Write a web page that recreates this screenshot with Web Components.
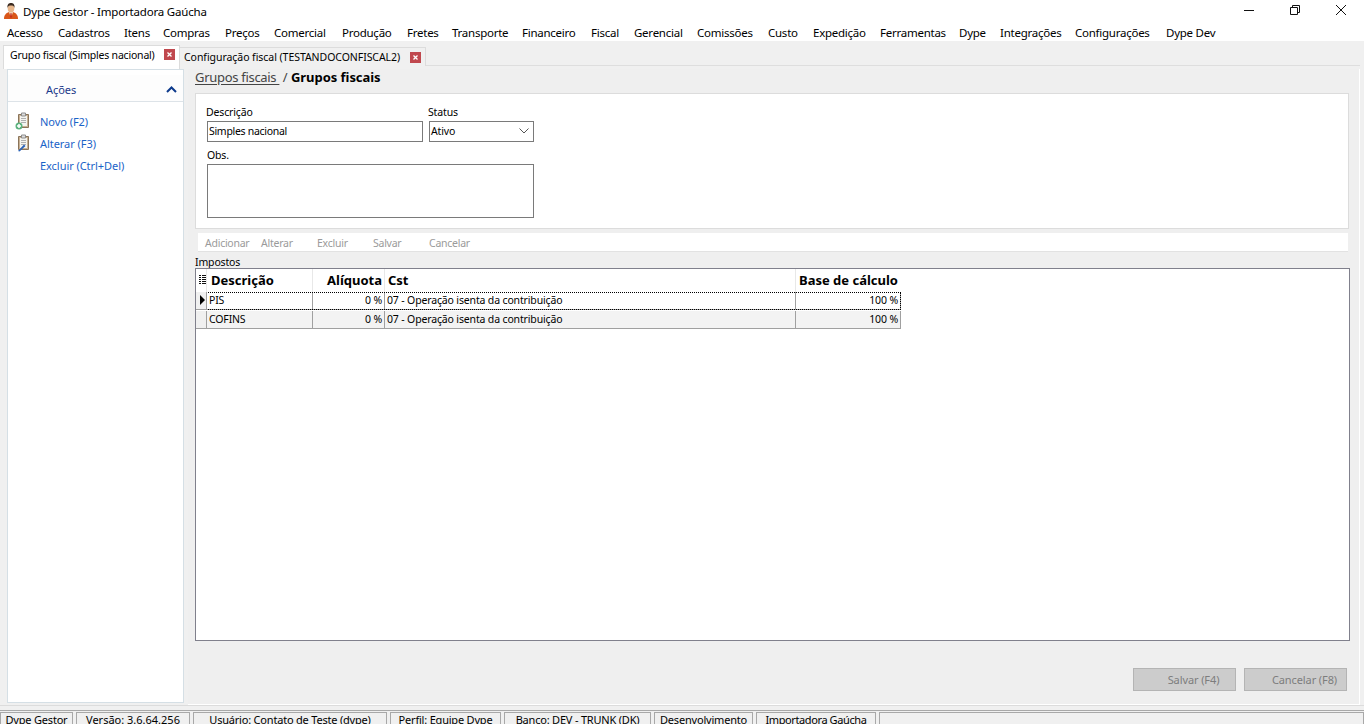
<!DOCTYPE html>
<html lang="pt-BR">
<head>
<meta charset="utf-8">
<title>Dype Gestor</title>
<style>
    html, body { margin: 0; height: 100%; overflow: hidden; }
    body { font: 10.5px "Noto Sans", "Liberation Sans", sans-serif; letter-spacing: -.15px; color: #000; background: #f0f0f0; }
    #app { display: flex; flex-direction: column; width: 1364px; height: 724px; overflow: hidden; }
    #work { display: flex; flex: none; height: 636px; margin-bottom: 4px; border-bottom: 1px solid #dcdcdc; }
</style>
</head>
<body>
<div id="app">
    <app-titlebar>Dype Gestor - Importadora Gaúcha</app-titlebar>
    <app-menubar></app-menubar>
    <app-tabs></app-tabs>
    <div id="work">
        <side-panel></side-panel>
        <fiscal-main></fiscal-main>
    </div>
    <status-bar></status-bar>
</div>

<script>
class AppTitlebar extends HTMLElement {
    constructor() {
        super();
        this.attachShadow({mode: 'open'}).innerHTML = `<style>
            :host { display: flex; align-items: center; height: 22px; background: #fff; font-size: 11.5px; letter-spacing: -.19px; flex: none; }
            .logo { width: 16px; height: 18px; margin: 0 4px 0 3px; }
            .text { flex: 1; padding-top: 1px; }
            .ctl { width: 16px; height: 16px; margin-top: -3px; }
            .ctl + .ctl { margin-left: 30px; }
            .ctls { display: flex; margin-right: 15px; }
        </style>
        <svg class="logo" viewBox="0 0 16 18">
            <path d="M1 17c0-4 2-6 5-7h4c3 1 5 3 5 7z" fill="#d9571a"/>
            <path d="M6 10l2 6 2-6z" fill="#f3e3cf"/>
            <path d="M7.500 11h1l.6 4-1.100 1.500L6.900 15z" fill="#c8301a"/>
            <ellipse cx="8" cy="6.500" rx="3.300" ry="4" fill="#e8b78c"/>
            <path d="M4.500 6C4 2 6 1 8 1s4 1 3.500 5C11 4 10 3.500 8 3.500S5 4 4.500 6z" fill="#3a2a20"/>
        </svg>
        <span class="text"><slot></slot></span>
        <div class="ctls">
            <svg class="ctl" viewBox="0 0 16 16"><path d="M3 8.500h10" stroke="#111" fill="none"/></svg>
            <svg class="ctl" viewBox="0 0 16 16"><path d="M3.500 5.500h7v7h-7zM5.500 5.500v-2h7v7h-2" stroke="#111" fill="none"/></svg>
            <svg class="ctl" viewBox="0 0 16 16"><path d="M3 3l10 10M13 3L3 13" stroke="#111" fill="none"/></svg>
        </div>`;
    }
}

// largura de cada item = distancia ate o proximo item do menu
const MENU_ITEMS = [
    ['Acesso', 51], ['Cadastros', 66], ['Itens', 39], ['Compras', 62], ['Preços', 49],
    ['Comercial', 68], ['Produção', 65], ['Fretes', 45], ['Transporte', 70], ['Financeiro', 69],
    ['Fiscal', 43], ['Gerencial', 63], ['Comissões', 71], ['Custo', 45], ['Expedição', 67],
    ['Ferramentas', 79], ['Dype', 41], ['Integrações', 75], ['Configurações', 91], ['Dype Dev', 60]
];

class AppMenubar extends HTMLElement {
    constructor() {
        super();
        const items = MENU_ITEMS.map(([name, w]) => `<span style="width:${w}px">${name}</span>`).join('');
        this.attachShadow({mode: 'open'}).innerHTML = `<style>
            :host { display: flex; align-items: center; height: 19px; padding: 2px 0 0 7px; box-sizing: border-box; background: #fff; font-size: 11.5px; letter-spacing: -.25px; flex: none; }
            span { flex: none; white-space: nowrap; }
        </style>${items}`;
    }
}

class TabClose extends HTMLElement {
    constructor() {
        super();
        this.attachShadow({mode: 'open'}).innerHTML = `<style>
            :host { display: block; width: 11px; height: 11px; background: #c0484e; flex: none; }
            svg { display: block; }
        </style>
        <svg width="11" height="11" viewBox="0 0 11 11"><path d="M3.500 3.500l4 4M7.500 3.500l-4 4" stroke="#fff" stroke-width="1.300"/></svg>`;
    }
}

class AppTabs extends HTMLElement {
    constructor() {
        super();
        this.attachShadow({mode: 'open'}).innerHTML = `<style>
            :host { display: flex; align-items: flex-start; height: 28px; padding: 4px 4px 0 3px; box-sizing: border-box; background: #f0f0f0; flex: none; }
            .tab { display: flex; align-items: center; box-sizing: border-box; white-space: nowrap; flex: none; }
            .on { width: 177px; height: 24px; padding: 0 4px 6px 6px; justify-content: space-between; background: #fff; border: 1px solid #dcdcdc; border-bottom: 0; letter-spacing: -.2px; }
            .off { width: 246px; height: 19px; margin-top: 2px; padding: 0 4px 0 4px; justify-content: space-between; background: #f0f0f0; border: 1px solid #dcdcdc; border-left: 0; border-bottom: 0; letter-spacing: -.05px; }
            .bar { flex: 1; box-sizing: border-box; height: 19px; margin-top: 2px; border-bottom: 1px solid #dedede; }
        </style>
        <div class="tab on"><span>Grupo fiscal (Simples nacional)</span><tab-close></tab-close></div>
        <div class="tab off"><span>Configuração fiscal (TESTANDOCONFISCAL2)</span><tab-close></tab-close></div>
        <div class="bar"></div>`;
    }
}

class SidePanel extends HTMLElement {
    constructor() {
        super();
        const clip = `<path d="M3.500 2.500h10v13h-10z" fill="#c8b193" stroke="#8a745a"/><path d="M5 4h7v10H5z" fill="#f4f4f0"/><path d="M6.500 1h4v3h-4z" fill="#dcdcdc" stroke="#8c8c8c"/><path d="M6 6.500h5M6 8.500h5M6 10.500h5" stroke="#b0b0b0"/>`;
        this.attachShadow({mode: 'open'}).innerHTML = `<style>
            :host { display: block; width: 177px; margin: 0 0 2px 7px; box-sizing: border-box; background: #fff; border: 1px solid #d5dfe5; flex: none; font-size: 11px; letter-spacing: -.05px; }
            .head { display: flex; align-items: center; justify-content: space-between; height: 27px; margin-top: 5px; padding: 3px 6px 0 38px; box-sizing: border-box; background: #fdfdfd; border-bottom: 1px solid #dde3e8; color: #1c3a8a; }
            .list { display: flex; flex-direction: column; padding-top: 8px; color: #1a63c8; }
            .row { display: flex; align-items: center; height: 22px; }
            .ico { width: 16px; height: 18px; margin: 0 9px 0 7px; flex: none; }
        </style>
        <div class="head"><span>Ações</span>
            <svg width="11" height="7" viewBox="0 0 11 7"><path d="M1 6l4.500-4.500L10 6" fill="none" stroke="#0d3a8c" stroke-width="2"/></svg>
        </div>
        <div class="list">
            <div class="row"><svg class="ico" viewBox="0 0 16 18">${clip}<circle cx="4" cy="14" r="3.500" fill="#5cb27e"/><path d="M2 14h4M4 12v4" stroke="#fff" stroke-width="1.500"/></svg><span>Novo (F2)</span></div>
            <div class="row"><svg class="ico" viewBox="0 0 16 18">${clip}<path d="M3 17l6-6.500 1.500 1.500-6 5.500z" fill="#2a62b8"/></svg><span>Alterar (F3)</span></div>
            <div class="row"><span class="ico"></span><span>Excluir (Ctrl+Del)</span></div>
        </div>`;
    }
}

class FiscalMain extends HTMLElement {
    constructor() {
        super();
        this.attachShadow({mode: 'open'}).innerHTML = `<style>
            :host { display: flex; flex-direction: column; flex: 1; min-width: 0; margin: 0 4px 0 4px; padding: 0 10px 0 7px; background: #efefef; border: solid #fff; border-width: 0 1px 1px 0; }
            .crumb { height: 24px; font-size: 13px; letter-spacing: 0; line-height: 16px; color: #444; white-space: nowrap; }
            .crumb u { text-underline-offset: 2px; letter-spacing: -.3px; }
            .crumb b { color: #000; letter-spacing: -.05px; }
            .imp { margin-top: 4px; height: 12px; line-height: 12px; }
            .end { display: flex; justify-content: flex-end; gap: 8px; margin: 27px 2px 0 0; }
        </style>
        <div class="crumb"><u>Grupos fiscais&nbsp;</u> / <b>Grupos fiscais</b></div>
        <fiscal-form></fiscal-form>
        <edit-toolbar></edit-toolbar>
        <div class="imp">Impostos</div>
        <tax-grid></tax-grid>
        <div class="end"><off-button>Salvar (F4)</off-button><off-button>Cancelar (F8)</off-button></div>`;
    }
}

class FiscalForm extends HTMLElement {
    constructor() {
        super();
        this.attachShadow({mode: 'open'}).innerHTML = `<style>
            :host { display: block; height: 136px; box-sizing: border-box; padding: 11px 0 0 11px; background: #fff; border: 1px solid #dcdcdc; flex: none; }
            .line { display: flex; gap: 6px; }
            label { display: block; height: 16px; line-height: 14px; margin-left: -1px; }
            .box { box-sizing: border-box; height: 21px; border: 1px solid #7a7a7a; display: flex; align-items: center; padding: 0 2px 2px 1px; background: #fff; }
            .desc { width: 216px; letter-spacing: -.3px; }
            .st { width: 105px; justify-content: space-between; padding-right: 4px; }
            .obs { width: 327px; height: 54px; }
            .o { margin-top: 6px; height: 15px; margin-bottom: 1px; margin-left: 0; }
        </style>
        <div class="line">
            <div><label>Descrição</label><div class="box desc">Simples nacional</div></div>
            <div><label>Status</label><div class="box st">Ativo
                <svg width="10" height="6" viewBox="0 0 10 6"><path d="M.5 .5L5 5l4.500-4.500" fill="none" stroke="#555"/></svg>
            </div></div>
        </div>
        <label class="o">Obs.</label>
        <div class="box obs"></div>`;
    }
}

class EditToolbar extends HTMLElement {
    constructor() {
        super();
        this.attachShadow({mode: 'open'}).innerHTML = `<style>
            :host { display: flex; align-items: center; height: 19px; box-sizing: border-box; margin: 4px 1px 0 3px; padding: 1px 0 0 7px; background: #fff; border-bottom: 1px solid #e2e2e2; color: #9a9a9a; letter-spacing: -.25px; flex: none; }
            span { flex: none; }
        </style>
        <span style="width:56px">Adicionar</span><span style="width:56px">Alterar</span><span style="width:56px">Excluir</span><span style="width:56px">Salvar</span><span>Cancelar</span>`;
    }
}

class TaxGrid extends HTMLElement {
    constructor() {
        super();
        const rows = [['PIS', true], ['COFINS', false]].map(([name, cur]) => `
            <div class="row ${cur ? 'cur' : 'alt'}">
                <div class="c ind">${cur ? '<i></i>' : ''}</div>
                <div class="c">${name}</div>
                <div class="c r">0 %</div>
                <div class="c">07 - Operação isenta da contribuição</div>
                <div class="c r last">100 %</div>
            </div>`).join('');
        this.attachShadow({mode: 'open'}).innerHTML = `<style>
            :host { display: block; height: 373px; box-sizing: border-box; background: #fff; border: 1px solid #80808c; flex: none; margin-right: -1px; }
            .row { display: grid; grid-template-columns: 11px 106px 72px 411px 105px; width: 705px; }
            .head { height: 23px; font-weight: 700; font-size: 13px; letter-spacing: 0; }
            .head .c { border-right: 1px solid #e8e8e8; display: flex; align-items: center; padding: 0 2px 2px 4px; }
            .head .c:nth-child(3) { padding-left: 0; }
            .head .c:last-child { border-right: 0; padding-left: 3px; }
            .head .c:nth-child(4) { padding-left: 3px; }
            .c { box-sizing: border-box; padding: 0 2px; white-space: nowrap; overflow: hidden; }
            .r { text-align: right; justify-content: flex-end; }
            .body .c { height: 18px; line-height: 16px; border-right: 1px solid #a0a0a0; border-bottom: 1px solid #a0a0a0; }
            .cur { outline: 1px dotted #000; outline-offset: -1px; }
            .alt { background: #f3f3f3; margin-top: 1px; }
            .ind { background: #f0f0f0; padding: 0; position: relative; }
            .ind i { position: absolute; left: 4px; top: 3px; border: solid transparent; border-width: 5px 0 5px 5px; border-left-color: #000; }
            svg { display: block; }
        </style>
        <div class="row head">
            <div class="c" style="padding:0 0 2px 3px"><svg width="7" height="9" viewBox="0 0 7 9"><path d="M0 .5h2M3 .5h4M0 2.500h2M3 2.500h4M0 4.500h2M3 4.500h4M0 6.500h2M3 6.500h4M0 8.500h2M3 8.500h4" stroke="#111"/></svg></div>
            <div class="c">Descrição</div>
            <div class="c r">Alíquota</div>
            <div class="c">Cst</div>
            <div class="c">Base de cálculo</div>
        </div>
        <div class="body">${rows}</div>`;
    }
}

class OffButton extends HTMLElement {
    constructor() {
        super();
        this.attachShadow({mode: 'open'}).innerHTML = `<style>
            :host { display: flex; align-items: center; justify-content: center; width: 103px; height: 23px; box-sizing: border-box; padding-left: 18px; background: #cccccc; border: 1px solid #b4b4b4; color: #7d7d7d; font-size: 11px; letter-spacing: -.1px; }
        </style><slot></slot>`;
    }
}

const STATUS_PANELS = [
    ['Dype Gestor', 73, -.2], ['Versão: 3.6.64.256', 114, 0], ['Usuário: Contato de Teste (dype)', 194, -.2],
    ['Perfil: Equipe Dype', 111, -.2], ['Banco: DEV - TRUNK (DK)', 147, -.2], ['Desenvolvimento', 99, -.2],
    ['Importadora Gaúcha', 120, -.4], ['', 485, 0]
];

class StatusBar extends HTMLElement {
    constructor() {
        super();
        const panels = STATUS_PANELS.map(([text, w, sp]) => `<div style="width:${w}px;letter-spacing:${sp}px">${text}</div>`).join('');
        this.attachShadow({mode: 'open'}).innerHTML = `<style>
            :host { display: flex; gap: 3px; height: 14px; box-sizing: border-box; padding-top: 1px; border-top: 1px solid #a8a8a8; background: #f0f0f0; font-size: 11px; flex: none; overflow: hidden; }
            div { box-sizing: border-box; height: 20px; flex: none; text-align: center; white-space: nowrap; line-height: 14px; border: 1px solid #a8a8a8; border-bottom: 0; }
        </style>${panels}`;
    }
}

window.customElements.define('app-titlebar', AppTitlebar);
window.customElements.define('app-menubar', AppMenubar);
window.customElements.define('tab-close', TabClose);
window.customElements.define('app-tabs', AppTabs);
window.customElements.define('side-panel', SidePanel);
window.customElements.define('fiscal-main', FiscalMain);
window.customElements.define('fiscal-form', FiscalForm);
window.customElements.define('edit-toolbar', EditToolbar);
window.customElements.define('tax-grid', TaxGrid);
window.customElements.define('off-button', OffButton);
window.customElements.define('status-bar', StatusBar);
</script>
</body>
</html>
